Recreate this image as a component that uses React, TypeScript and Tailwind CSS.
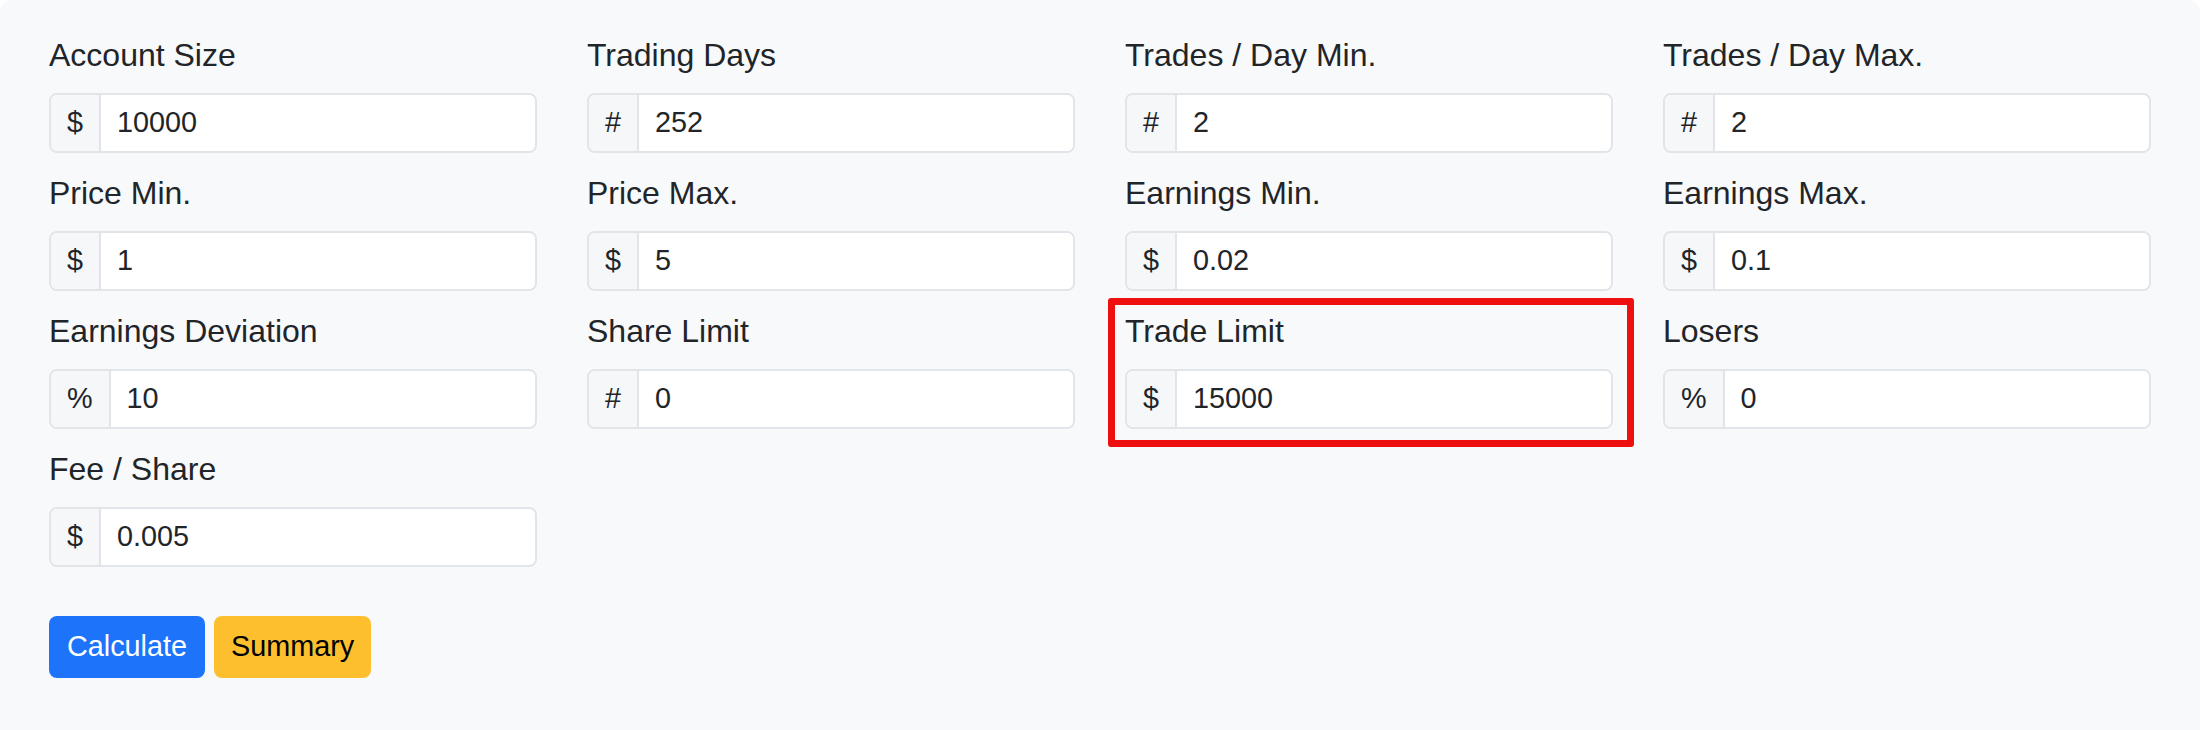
import React from 'react';

type Field = {
  label: string;
  prefix: string;
  value: string;
  highlight?: boolean;
};

const fields: Field[] = [
  { label: 'Account Size', prefix: '$', value: '10000' },
  { label: 'Trading Days', prefix: '#', value: '252' },
  { label: 'Trades / Day Min.', prefix: '#', value: '2' },
  { label: 'Trades / Day Max.', prefix: '#', value: '2' },
  { label: 'Price Min.', prefix: '$', value: '1' },
  { label: 'Price Max.', prefix: '$', value: '5' },
  { label: 'Earnings Min.', prefix: '$', value: '0.02' },
  { label: 'Earnings Max.', prefix: '$', value: '0.1' },
  { label: 'Earnings Deviation', prefix: '%', value: '10' },
  { label: 'Share Limit', prefix: '#', value: '0' },
  { label: 'Trade Limit', prefix: '$', value: '15000', highlight: true },
  { label: 'Losers', prefix: '%', value: '0' },
  { label: 'Fee / Share', prefix: '$', value: '0.005' },
];

const FieldCell = ({ field }: { field: Field }) => (
  <div className="relative">
    <label className="block text-[32px] leading-[48px] mb-[14px] text-[#212529]">
      {field.label}
    </label>
    <div className="flex h-[60px] rounded-[8px] border-2 border-[#e1e4e8] bg-white overflow-hidden">
      <span className="flex items-center px-[16px] bg-[#f6f7f9] border-r-2 border-[#e1e4e8] text-[28.8px] text-[#212529]">
        {field.prefix}
      </span>
      <input
        type="text"
        defaultValue={field.value}
        className="flex-1 min-w-0 pl-[16px] text-[28.8px] text-[#212529] bg-white outline-none"
      />
    </div>
    {field.highlight && (
      <div className="absolute -left-[17px] -top-[9px] -right-[21px] -bottom-[18px] border-[7px] border-[#ee0f0f] rounded-[3px] pointer-events-none" />
    )}
  </div>
);

export default function App() {
  return (
    <div className="min-h-[730px] bg-white" style={{ fontFamily: '"Liberation Sans", Arial, sans-serif' }}>
      <div className="min-h-[760px] bg-[#f8f9fa] rounded-t-[12px] px-[49px] pt-[31px]">
        <div className="grid grid-cols-4 gap-x-[50px] gap-y-[16px]">
          {fields.map((f) => (
            <FieldCell key={f.label} field={f} />
          ))}
        </div>

        <div className="flex gap-[9px] mt-[49px]">
          <button className="h-[62px] px-[18px] rounded-[8px] bg-[#1d74fb] text-white text-[28.8px]">
            Calculate
          </button>
          <button className="h-[62px] px-[17px] rounded-[8px] bg-[#fdbf2e] text-black text-[28.8px]">
            Summary
          </button>
        </div>
      </div>
    </div>
  );
}
